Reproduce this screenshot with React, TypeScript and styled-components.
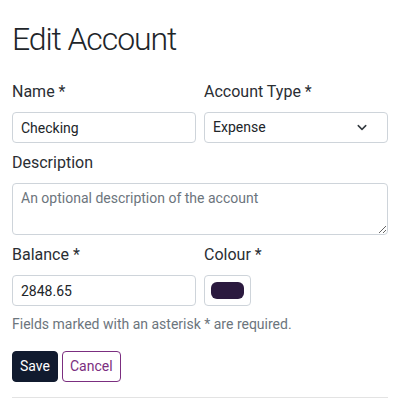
import React from "react";
import styled, { createGlobalStyle } from "styled-components";

const Global = createGlobalStyle`
  * { box-sizing: border-box; }
  body {
    margin: 0;
    background: #fff;
    color: #212529;
    font-family: Roboto, "Liberation Sans", sans-serif;
    font-size: 16px;
    line-height: 1.5;
  }
`;

const Page = styled.div`
  padding: 0 12px;
`;

const Title = styled.h1`
  margin: 20px 0 22px;
  font-size: 32px;
  font-weight: 300;
  line-height: 38px;
  letter-spacing: -1.1px;
`;

const Form = styled.form`
  display: flex;
  flex-direction: column;
  gap: 8px;
`;

const Row = styled.div`
  display: grid;
  grid-template-columns: 1fr 1fr;
  column-gap: 8px;
`;

const Field = styled.div`
  display: flex;
  flex-direction: column;
  align-items: flex-start;
`;

const Label = styled.label`
  font-size: 16px;
  line-height: 24px;
  margin-bottom: 8px;
  color: #2a2e33;
`;

const controlBase = `
  width: 100%;
  font-family: inherit;
  font-size: 14px;
  line-height: 21px;
  color: #212529;
  background: #fff;
  border: 1px solid #ced4da;
  border-radius: 4px;
  padding: 4px 8px;
  outline: none;
`;

const Input = styled.input`
  ${controlBase}
  height: 31px;
`;

const SelectBox = styled.div`
  ${controlBase}
  height: 31px;
  display: flex;
  align-items: center;
  justify-content: space-between;
  padding-right: 19px;
`;

const TextArea = styled.textarea`
  ${controlBase}
  height: 52px;
  resize: vertical;
  display: block;
  &::placeholder { color: #6c757d; }
`;

const ColorBox = styled.div`
  width: 47px;
  height: 31px;
  border: 1px solid #ced4da;
  border-radius: 4px;
  padding: 6px 6px;
  display: flex;
`;

const Swatch = styled.div<{ $c: string }>`
  flex: 1;
  background: ${(p) => p.$c};
  border-radius: 6px;
`;

const Help = styled.div`
  font-size: 14px;
  line-height: 21px;
  color: #6c757d;
`;

const Buttons = styled.div`
  display: flex;
  gap: 4px;
  margin-top: 8px;
`;

const Button = styled.button<{ $variant: "primary" | "outline" }>`
  font-family: inherit;
  font-size: 14px;
  line-height: 21px;
  height: 31px;
  padding: 4px 7px;
  border-radius: 4px;
  cursor: pointer;
  border: 1px solid ${(p) => (p.$variant === "primary" ? "#111b2f" : "#7b2e80")};
  background: ${(p) => (p.$variant === "primary" ? "#111b2f" : "#fff")};
  color: ${(p) => (p.$variant === "primary" ? "#fff" : "#7b2e80")};
`;

const Rule = styled.hr`
  margin: 15px 0 0;
  border: 0;
  border-top: 1px solid #e3e3e3;
`;

const Chevron = () => (
  <svg width="12" height="9" viewBox="0 0 16 12" fill="none">
    <path d="M3 3.5l5 5 5-5" stroke="#343a40" strokeWidth="2" strokeLinecap="round" strokeLinejoin="round" />
  </svg>
);

export default function App() {
  return (
    <>
      <Global />
      <Page>
        <Title>Edit Account</Title>
        <Form onSubmit={(e) => e.preventDefault()}>
          <Row>
            <Field>
              <Label>Name *</Label>
              <Input defaultValue="Checking" />
            </Field>
            <Field>
              <Label>Account Type *</Label>
              <SelectBox>
                <span>Expense</span>
                <Chevron />
              </SelectBox>
            </Field>
          </Row>
          <Field>
            <Label>Description</Label>
            <TextArea placeholder="An optional description of the account" />
          </Field>
          <Row>
            <Field>
              <Label>Balance *</Label>
              <Input defaultValue="2848.65" />
            </Field>
            <Field>
              <Label>Colour *</Label>
              <ColorBox>
                <Swatch $c="#2b1a3f" />
              </ColorBox>
            </Field>
          </Row>
          <Help>Fields marked with an asterisk * are required.</Help>
          <Buttons>
            <Button $variant="primary" type="submit">Save</Button>
            <Button $variant="outline" type="button">Cancel</Button>
          </Buttons>
        </Form>
        <Rule />
      </Page>
    </>
  );
}
